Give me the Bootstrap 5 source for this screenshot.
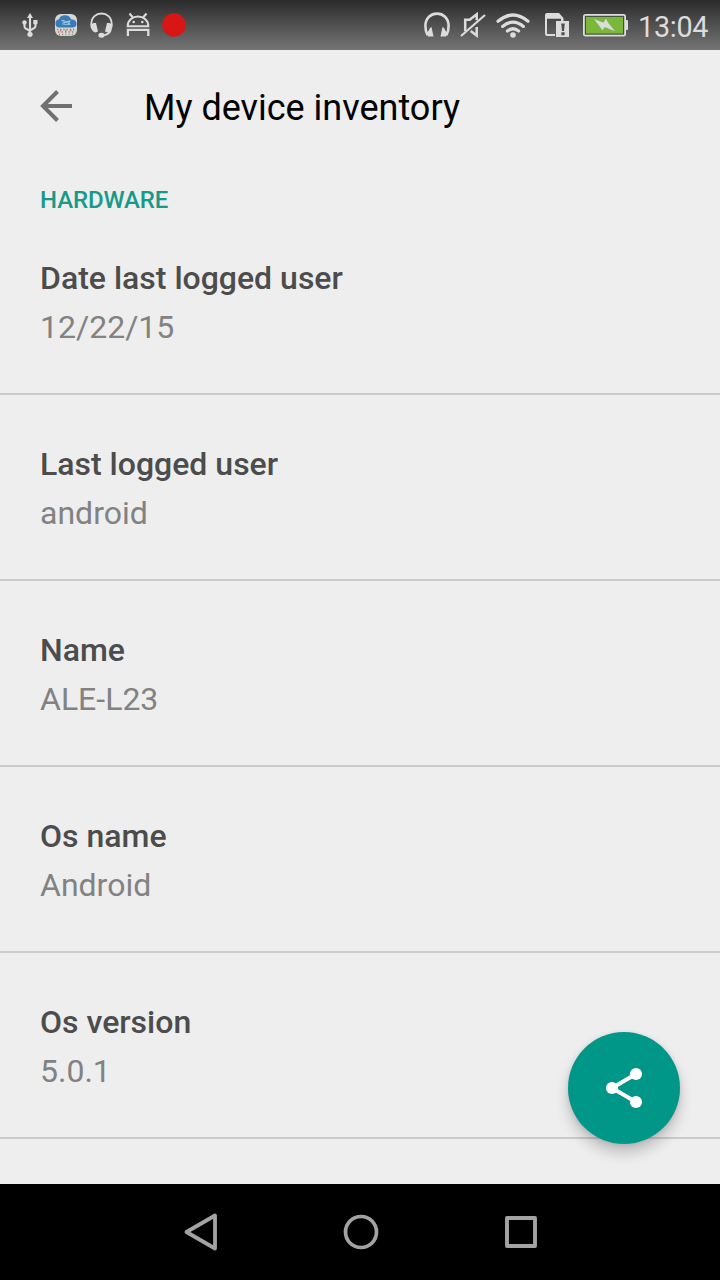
<!DOCTYPE html>
<html lang="en">
<head>
<meta charset="utf-8">
<meta name="viewport" content="width=device-width, initial-scale=1">
<title>My device inventory</title>
<link rel="stylesheet" href="https://cdn.jsdelivr.net/npm/bootstrap@5.3.0/dist/css/bootstrap.min.css">
<style>
body{font-family:Roboto,"Noto Sans",sans-serif;background:#eee}
svg{display:block;flex:none}
.screen{width:720px;height:1280px}
.statusbar{height:50px;padding:0 12px 0 20px;background:linear-gradient(#2b2b2b,#757575);color:#dcdcdc}
.left-icons{gap:12px}
.clock{font-size:28.8px;line-height:34px;letter-spacing:-.3px;width:70px;margin-left:8px;margin-top:3px;white-space:nowrap}
.appbar{height:112px;padding:0 39px}
.appbar h1{font-size:36px;line-height:42px;font-weight:400;margin:3px 0 0 71px;color:#000}
.category{font-size:24px;line-height:28px;letter-spacing:-.1px;font-weight:500;color:#179a8a;padding:24px 40px 0;margin:0}
.list-group .entry{height:186px;padding:50px 40px 0;border:0;border-bottom:2px solid #cbcbcb;background:none;border-radius:0;flex:none}
.list-group .entry:first-child{height:181px;padding-top:45px}
.entry h3{font-size:32px;line-height:38px;font-weight:500;color:#4c4c4c;margin:0 0 11px}
.entry p{font-size:32px;line-height:38px;color:#828282;margin:0}
.fab{right:40px;bottom:40px;width:112px;height:112px;background:#009688;border:0;padding:0;box-shadow:0 9px 14px rgba(0,0,0,.2),0 1px 5px rgba(0,0,0,.1)}
.navkeys{height:96px;background:#000;padding:0 179px 0 181px}
</style>
</head>
<body>
<div class="screen d-flex flex-column overflow-hidden">
  <header class="statusbar d-flex justify-content-between flex-shrink-0">
    <div class="left-icons d-flex">
      <svg width="22" height="50" viewBox="20 0 22 50" fill="none" stroke="#dcdcdc" stroke-width="2.100"><path d="M30 34V17M24.500 23v3.500q0 1.500 1.500 2.200l4 2.300M35.500 22v4q0 1.500-1.500 2.200l-4 2.300"/><path d="M30 13l3 5h-6z" fill="#dcdcdc" stroke="none"/><circle cx="30" cy="34.300" r="2.600" fill="#dcdcdc" stroke="none"/><circle cx="24.500" cy="22.500" r="2.200" fill="#dcdcdc" stroke="none"/><path d="M33.300 20h4.200v4.200h-4.200z" fill="#dcdcdc" stroke="none"/></svg>
      <svg width="24" height="50" viewBox="54 0 24 50"><rect x="55" y="14" width="22" height="22" rx="6" fill="#d5d7d5"/><path d="M58.500 27.500q-3-.5-3-4.500 0-3.300 3.500-3.800Q60 15.500 65 15.300q4.500 0 6 4 5.500.3 5.500 4.500 0 3.400-3.500 3.700z" fill="#397bb9"/><text x="61" y="25.300" font-size="6.500" textLength="9.500" fill="#c2daeb">Test</text><g fill="none" stroke-width="1.400"><path d="M57 29.500h18" stroke="#56a268" stroke-dasharray="1.200 2"/><path d="M58 32h17" stroke="#cf6170" stroke-dasharray="1.300 2.200"/><path d="M59 34.500h14" stroke="#56a268" stroke-dasharray="1 2.200"/><path d="M60 30.500h14" stroke="#cf6170" stroke-dasharray="1.200 4"/></g></svg>
      <svg width="24" height="50" viewBox="90 0 24 50"><path d="M91.300 26v-2c0-14 20.400-14 20.400 0v2M111 29q-1 5-7 6.300" fill="none" stroke="#dcdcdc" stroke-width="1.800"/><path d="M93.500 23l2.500 0 2 8.500-2.500 1q-3-.5-5-5.500 0-3 3-4zM109.500 23l-2.500 0-2 8.500 2.500 1q3-.5 5-5.500 0-3-3-4z" fill="#dcdcdc"/><ellipse cx="101.500" cy="35.300" rx="3.100" ry="2.500" fill="#dcdcdc"/></svg>
      <svg width="24" height="50" viewBox="126 0 24 50"><path d="M127.700 26.300c0-13 20.600-13 20.600 0zM132.500 17l-3-3.500M143.500 17l3-3.500" fill="none" stroke="#dcdcdc" stroke-width="2.100"/><circle cx="133.700" cy="22" r="1.300" fill="#dcdcdc"/><circle cx="142.300" cy="22" r="1.300" fill="#dcdcdc"/><path d="M127.900 36v-6.100h20.400V36" fill="none" stroke="#dcdcdc" stroke-width="2.300"/></svg>
      <svg width="24" height="50" viewBox="162 0 24 50"><circle cx="174" cy="25" r="11.800" fill="#d91616"/></svg>
    </div>
    <div class="d-flex">
      <svg width="36" height="50" viewBox="422 0 36 50"><path d="M427.500 35Q425.400 31.500 425.400 26C425.400 9.500 448.600 9.500 448.600 26Q448.600 31.500 446.500 35" fill="none" stroke="#dcdcdc" stroke-width="2.600"/><path d="M431.500 27l2 9.500h-5.500l-2-3.500q3-2 4-5zM442.500 27l-2 9.500h5.500l2-3.500q-3-2-4-5z" fill="#dcdcdc"/></svg>
      <svg width="36" height="50" viewBox="458 0 36 50" fill="none" stroke="#dcdcdc"><path d="M465.200 31v-11.200h4.500l7-5.500v6M476.700 27v8.500l-6-4.500" stroke-width="2.500"/><path d="M461 36L485 15" stroke-width="2.200"/></svg>
      <svg width="44" height="50" viewBox="494 0 44 50" fill="none" stroke="#dcdcdc" stroke-width="3.200" stroke-linecap="round"><path d="M498 21.300q15-12.600 30 0M502.600 26.400q10.400-8.400 20.800 0M507.400 31q5.600-4.500 11.200 0"/><circle cx="513" cy="35" r="2.800" fill="#dcdcdc" stroke="none"/></svg>
      <svg width="40" height="50" viewBox="538 0 40 50"><path d="M547 13h12l4.500 5v3H561v-2.300H547V34h8v2h-8q-2 0-2-2V15q0-2 2-2z" fill="#dcdcdc"/><path d="M556 21h13v16h-13z" fill="#dcdcdc"/><path d="M561.200 23.500h3.600l-.8 7.500h-2zM561.400 32.300h3.200v2.900h-3.200z" fill="#4f4f4f"/></svg>
      <svg width="52" height="50" viewBox="578 0 52 50"><rect x="583" y="14" width="43" height="22.500" rx="2.500" fill="#dcdcdc"/><path d="M626 20h1q1 0 1 1v8q0 1-1 1h-1z" fill="#dcdcdc"/><rect x="584.800" y="15.800" width="39.400" height="18.900" fill="#48513e"/><rect x="586" y="17" width="37" height="16.500" fill="#79b83a"/><path d="M594 19l9.500 3.800 2.300-4 2.700 4.500 6.500 8-10.300-4.300-2.200 3.200z" fill="#dcdcdc"/></svg>
      <div class="clock align-self-center">13:04</div>
    </div>
  </header>

  <main class="position-relative flex-grow-1 overflow-hidden">
    <div class="appbar d-flex align-items-center">
      <svg width="34" height="34" viewBox="39 89 34 34" fill="none" stroke="#707070" stroke-width="4"><path d="M72 106H43M57.500 91.500L43 106l14.500 14.500"/></svg>
      <h1>My device inventory</h1>
    </div>
    <h2 class="category text-uppercase">Hardware</h2>
    <div class="list-group">
      <div class="list-group-item entry"><h3>Date last logged user</h3><p>12/22/15</p></div>
      <div class="list-group-item entry"><h3>Last logged user</h3><p>android</p></div>
      <div class="list-group-item entry"><h3>Name</h3><p>ALE-L23</p></div>
      <div class="list-group-item entry"><h3>Os name</h3><p>Android</p></div>
      <div class="list-group-item entry"><h3>Os version</h3><p>5.0.1</p></div>
    </div>
    <button class="fab position-absolute rounded-circle d-flex align-items-center justify-content-center" aria-label="Share">
      <svg width="48" height="48" viewBox="600 1064 48 48"><path d="M636 1074l-24 14 24 14" fill="none" stroke="#fff" stroke-width="4"/><g fill="#fff"><circle cx="636" cy="1074" r="6.100"/><circle cx="612" cy="1088" r="6.100"/><circle cx="636" cy="1102" r="6.100"/></g></svg>
    </button>
  </main>

  <nav class="navkeys d-flex align-items-center justify-content-between flex-shrink-0">
    <svg width="40" height="40" viewBox="181 1212 40 40" fill="none" stroke="#a3a3a3" stroke-width="3.800" stroke-linejoin="round"><path d="M215 1215.500v33L186.500 1232z"/></svg>
    <svg width="40" height="40" viewBox="341 1212 40 40" fill="none" stroke="#a3a3a3" stroke-width="3.700"><circle cx="361" cy="1232" r="15.500"/></svg>
    <svg width="40" height="40" viewBox="501 1212 40 40" fill="none" stroke="#a3a3a3" stroke-width="3.900" stroke-linejoin="round"><rect x="507" y="1218" width="28" height="28"/></svg>
  </nav>
</div>
<script src="https://cdn.jsdelivr.net/npm/bootstrap@5.3.0/dist/js/bootstrap.bundle.min.js"></script>
</body>
</html>
